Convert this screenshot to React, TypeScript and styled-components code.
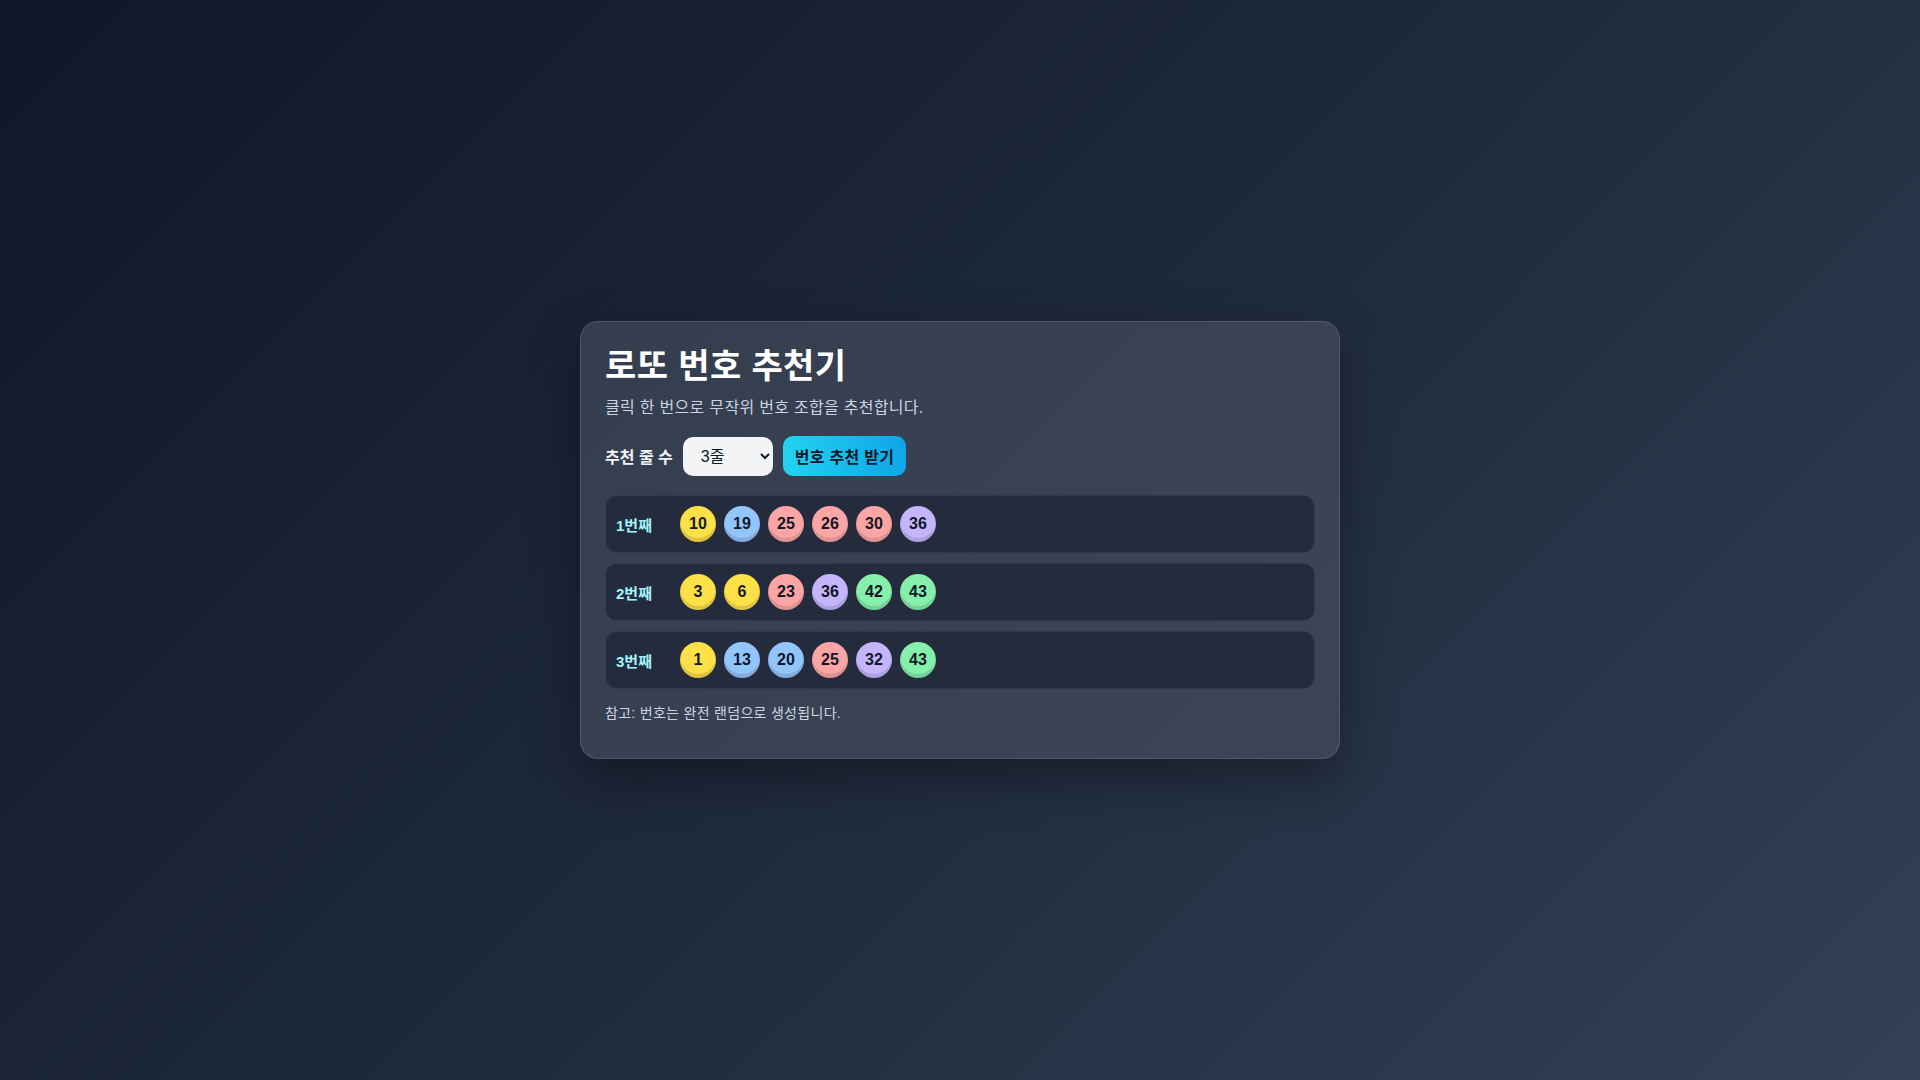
import React, { FunctionComponent, useState } from 'react';
import styled, { createGlobalStyle } from 'styled-components';

const GlobalStyle = createGlobalStyle`
    html, body {
        margin: 0;
        padding: 0;
        height: 100%;
    }

    body {
        font-family: 'Liberation Sans', 'Noto Sans CJK KR', sans-serif;
        color: #f8fafc;
    }

    #root {
        min-height: 100vh;
    }
`;

const Page = styled.div`
    display: flex;
    align-items: center;
    justify-content: center;
    min-height: 100vh;
    background: linear-gradient(135deg, #0f172a 0%, #1e293b 50%, #334155 100%);
`;

const Card = styled.div`
    width: 760px;
    box-sizing: border-box;
    padding: 24px 24px 36px;
    border-radius: 18px;
    border: 1px solid rgba(255, 255, 255, 0.12);
    background: linear-gradient(135deg, #343e4f 0%, #3b4556 100%);
    box-shadow: 0 20px 50px rgba(0, 0, 0, 0.35);
`;

const Title = styled.h1`
    margin: 0;
    font-size: 34px;
    line-height: 1.2;
    font-weight: 700;
    letter-spacing: 0.4px;
    color: #ffffff;
`;

const Subtitle = styled.p`
    margin: 8px 0 0;
    font-size: 16px;
    letter-spacing: 0.3px;
    color: #cbd5e1;
`;

const Controls = styled.div`
    display: flex;
    align-items: center;
    gap: 10px;
    margin-top: 18px;
`;

const ControlLabel = styled.label`
    font-size: 16px;
    font-weight: 700;
    color: #f1f5f9;
`;

const Select = styled.select`
    width: 90px;
    height: 39px;
    padding: 0 8px 0 14px;
    border: none;
    border-radius: 10px;
    background: #f3f4f6;
    color: #111827;
    font-family: inherit;
    font-size: 16px;
`;

const GenerateButton = styled.button`
    height: 40px;
    padding: 0 12px;
    border: none;
    border-radius: 10px;
    background: linear-gradient(90deg, #22d3ee 0%, #0ea5e9 100%);
    color: #0f172a;
    font-family: inherit;
    font-size: 16px;
    font-weight: 700;
    letter-spacing: 0.3px;
    cursor: pointer;
`;

const Results = styled.div`
    display: flex;
    flex-direction: column;
    gap: 10px;
    margin-top: 19px;
`;

const Row = styled.div`
    display: flex;
    align-items: center;
    padding: 10px 10px;
    border-radius: 12px;
    border: 1px solid rgba(255, 255, 255, 0.07);
    background: #232b3d;
`;

const RowLabel = styled.span`
    width: 64px;
    font-size: 15px;
    font-weight: 700;
    color: #a5f3fc;
`;

const Balls = styled.div`
    display: flex;
    gap: 8px;
`;

const ballColor = (n: number) => {
    if (n <= 10) return '#fde047';
    if (n <= 20) return '#93c5fd';
    if (n <= 30) return '#fca5a5';
    if (n <= 40) return '#c4b5fd';
    return '#86efac';
};

const Ball = styled.span<{ $n: number }>`
    display: flex;
    align-items: center;
    justify-content: center;
    width: 36px;
    height: 36px;
    border-radius: 50%;
    background: ${(p) => ballColor(p.$n)};
    box-shadow: inset 0 -4px 0 rgba(0, 0, 0, 0.12);
    color: #111827;
    font-size: 16px;
    font-weight: 700;
`;

const Note = styled.p`
    margin: 13px 0 0;
    font-size: 14px;
    letter-spacing: 0.3px;
    color: #cbd5e1;
`;

const initialSets = [
    [10, 19, 25, 26, 30, 36],
    [3, 6, 23, 36, 42, 43],
    [1, 13, 20, 25, 32, 43],
];

const pickNumbers = () => {
    const pool = Array.from({ length: 45 }, (_, i) => i + 1);
    const picked: number[] = [];
    while (picked.length < 6) {
        const idx = Math.floor(Math.random() * pool.length);
        picked.push(pool.splice(idx, 1)[0]);
    }
    return picked.sort((a, b) => a - b);
};

const App: FunctionComponent = () => {
    const [count, setCount] = useState(3);
    const [sets, setSets] = useState(initialSets);

    const generate = () => {
        setSets(Array.from({ length: count }, pickNumbers));
    };

    return (
        <>
            <GlobalStyle />
            <Page>
                <Card>
                    <Title>로또 번호 추천기</Title>
                    <Subtitle>
                        클릭 한 번으로 무작위 번호 조합을 추천합니다.
                    </Subtitle>
                    <Controls>
                        <ControlLabel htmlFor="count">추천 줄 수</ControlLabel>
                        <Select
                            id="count"
                            value={count}
                            onChange={(e) => setCount(Number(e.target.value))}
                        >
                            {[1, 2, 3, 4, 5].map((n) => (
                                <option key={n} value={n}>
                                    {n}줄
                                </option>
                            ))}
                        </Select>
                        <GenerateButton onClick={generate}>
                            번호 추천 받기
                        </GenerateButton>
                    </Controls>
                    <Results>
                        {sets.map((set, i) => (
                            <Row key={i}>
                                <RowLabel>{i + 1}번째</RowLabel>
                                <Balls>
                                    {set.map((n, j) => (
                                        <Ball key={j} $n={n}>
                                            {n}
                                        </Ball>
                                    ))}
                                </Balls>
                            </Row>
                        ))}
                    </Results>
                    <Note>참고: 번호는 완전 랜덤으로 생성됩니다.</Note>
                </Card>
            </Page>
        </>
    );
};

export default App;
